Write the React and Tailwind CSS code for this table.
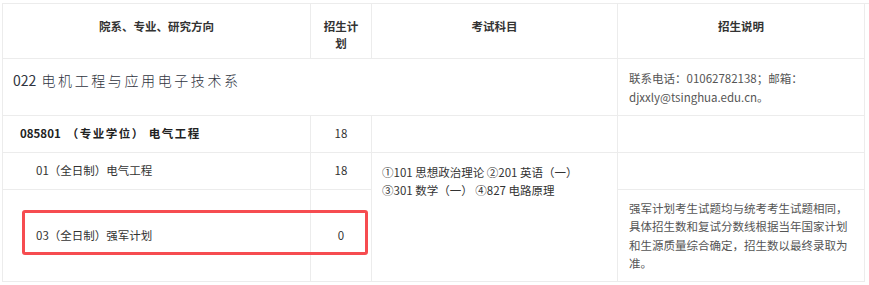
import React from 'react';

const font = { fontFamily: '"Noto Sans CJK SC", "Noto Sans", sans-serif' };

export default function App() {
  const cell = 'border-r border-b border-[#ececec]';
  return (
    <div className="relative w-[869px] h-[285px] bg-white pt-[3px] pl-[2px] text-[11.5px] text-[#333]" style={font}>
      <div className="grid grid-cols-[308px_61px_246px_247px] grid-rows-[55px_57px_37px_37px_92px] border-l border-t border-[#ececec]">
        {/* header */}
        <div className={`${cell} pt-[14px] text-center font-bold leading-[17px]`}>院系、专业、研究方向</div>
        <div className={`${cell} pt-[14px] px-3 text-center font-bold leading-[17px]`}>招生计划</div>
        <div className={`${cell} pt-[14px] text-center font-bold leading-[17px]`}>考试科目</div>
        <div className={`${cell} pt-[14px] text-center font-bold leading-[17px]`}>招生说明</div>

        {/* department */}
        <div className={`${cell} col-span-3 pt-[11px] pl-[10px] text-[14px] leading-[20px] text-[#2f3440]`}>
          022 <span className="ml-[2px] tracking-[2.6px] font-light">电机工程与应用电子技术系</span>
        </div>
        <div className={`${cell} pt-[10px] pl-[11px] pr-2 leading-[19px] text-[#555]`}>
          联系电话：01062782138；邮箱：
          <br />
          djxxly@tsinghua.edu.cn。
        </div>

        {/* major */}
        <div className={`${cell} flex items-center pl-[17px] font-bold text-[#222]`}>
          085801 <span className="ml-[6px] tracking-[1.5px]">（专业学位） 电气工程</span>
        </div>
        <div className={`${cell} flex items-center justify-center`}>18</div>
        <div className={cell}></div>
        <div className={cell}></div>

        {/* direction 01 */}
        <div className={`${cell} flex items-center pl-[33px]`}>01（全日制）电气工程</div>
        <div className={`${cell} flex items-center justify-center`}>18</div>
        <div className={`${cell} row-span-2 pt-[10px] pl-[10px] leading-[18px]`}>
          ①101 思想政治理论 ②201 英语（一）
          <br />
          ③301 数学（一） ④827 电路原理
        </div>
        <div className={cell}></div>

        {/* direction 03 */}
        <div className={`${cell} flex items-center pl-[33px]`}>03（全日制）强军计划</div>
        <div className={`${cell} flex items-center justify-center`}>0</div>
        <div className={`${cell} flex items-center pl-[11px] pr-[12px] leading-[18.5px] text-[#555]`}>
          强军计划考生试题均与统考考生试题相同，具体招生数和复试分数线根据当年国家计划和生源质量综合确定，招生数以最终录取为准。
        </div>
      </div>

      {/* highlight annotation */}
      <div className="absolute left-[22px] top-[210px] w-[346px] h-[45px] rounded-[3px] border-[3px] border-[#f64c50]"></div>
    </div>
  );
}
